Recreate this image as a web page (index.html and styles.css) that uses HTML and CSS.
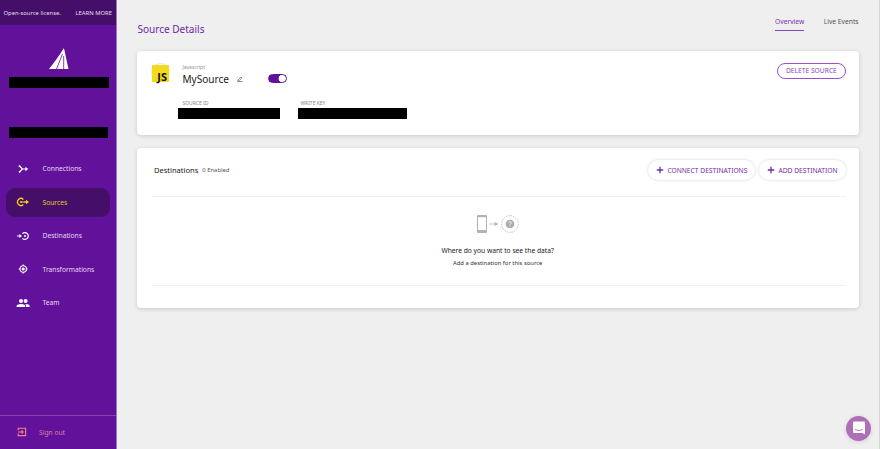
FILE: index.html
```html
<!DOCTYPE html>
<html lang="en">
<head>
<meta charset="utf-8">
<title>Source Details</title>
<link rel="stylesheet" href="styles.css">
</head>
<body>
<div class="app">
  <aside class="sidebar">
    <div class="license"><span>Open-source license.</span><a>LEARN MORE</a></div>
    <svg class="logo" viewBox="0 0 20 22"><path fill="#fff" d="M14.900 0 15 6 9 21H0Q9.500 9 14.900 0z"/><path fill="#fff" d="M15.200 1Q17.500 12 19.500 21H9z"/><path d="M13.500 6 7.500 21M14.700 8v13" stroke="#62119b" stroke-width=".8"/></svg>
    <div class="redacted workspace"></div>
    <div class="redacted account"></div>
    <nav class="nav">
      <a class="nav-item"><svg viewBox="0 0 14 12"><path d="M3.500 3 6.500 6 3.500 9M6 6h5" fill="none" stroke="currentColor" stroke-width="1.200"/><path d="M9.400 3.800 12.200 6 9.400 8.200z" fill="currentColor"/><circle cx="3.500" cy="3.200" r=".9" fill="currentColor"/><circle cx="3.500" cy="8.800" r=".9" fill="currentColor"/></svg><span>Connections</span></a>
      <a class="nav-item active"><svg viewBox="0 0 14 12"><path d="M7.400 3.400A3.500 3.500 0 1 0 7.400 8.600M8 6h3" fill="none" stroke="currentColor" stroke-width="1.300"/><path d="M10 3.800 13 6 10 8.200z" fill="currentColor"/><circle cx="5" cy="6" r="1.100" fill="currentColor"/><path d="M5 6h3" stroke="currentColor"/></svg><span>Sources</span></a>
      <a class="nav-item"><svg viewBox="0 0 14 12"><path d="M6.400 3.700A3.400 3.400 0 1 1 6.400 8.300M1 6h4" fill="none" stroke="currentColor" stroke-width="1.200"/><path d="M3.300 3.900 6.100 6 3.300 8.100z" fill="currentColor"/><circle cx="9" cy="6" r="1" fill="currentColor"/></svg><span>Destinations</span></a>
      <a class="nav-item"><svg viewBox="0 0 14 12"><circle cx="7.200" cy="6" r="3.200" fill="none" stroke="currentColor" stroke-width="1.100"/><circle cx="7.200" cy="6" r="1.600" fill="currentColor"/><path d="M7.200 1.500v1.500M7.200 9v1.500M2.700 6h1.500M10.200 6h1.500" stroke="currentColor" stroke-width="1.200"/></svg><span>Transformations</span></a>
      <a class="nav-item"><svg viewBox="0 0 14 12"><circle cx="5" cy="4" r="2" fill="currentColor"/><circle cx="9.600" cy="4" r="2" fill="currentColor"/><path d="M.6 10V8.800Q1.300 7 5 7T9.200 8.800V10zM10 10V8.600L9.300 7.100Q13.300 7.200 13.600 8.800V10z" fill="currentColor"/></svg><span>Team</span></a>
    </nav>
    <a class="signout"><svg viewBox="0 0 10 10"><path d="M1.200 3.200v-2h7.400v7.400H1.200v-2M1 5h5M4.500 3.300 6.200 5l-1.700 1.700" fill="none" stroke="currentColor" stroke-width="1.100"/></svg><span>Sign out</span></a>
  </aside>

  <main class="main">
    <header class="header">
      <h1>Source Details</h1>
      <div class="tabs"><a class="tab selected">Overview</a><a class="tab">Live Events</a></div>
    </header>

    <section class="card source">
      <div class="badge"><div class="js">JS</div></div>
      <div class="details">
        <div class="kind">Javascript</div>
        <div class="name-row">
          <span class="name">MySource</span>
          <svg class="pencil" viewBox="0 0 6 6"><path d="M.8 4.200 4 1l.9.900L1.800 5H.8zM.3 5.500H5.700" fill="none" stroke="#666" stroke-width=".7"/></svg>
          <span class="toggle"></span>
        </div>
        <div class="keys">
          <div class="key source-id"><label>SOURCE ID</label><div class="redacted"></div></div>
          <div class="key write-key"><label>WRITE KEY</label><div class="redacted"></div></div>
        </div>
      </div>
      <button class="delete"><span>DELETE SOURCE</span></button>
    </section>

    <section class="card destinations">
      <div class="dest-head">
        <h2>Destinations</h2><span class="count">0 Enabled</span>
        <button class="pill connect"><svg viewBox="0 0 8 8"><path d="M4 .8v6.400M.8 4h6.400" stroke="currentColor" stroke-width="1.300"/></svg><span>CONNECT DESTINATIONS</span></button>
        <button class="pill add"><svg viewBox="0 0 8 8"><path d="M4 .8v6.400M.8 4h6.400" stroke="currentColor" stroke-width="1.300"/></svg><span>ADD DESTINATION</span></button>
      </div>
      <div class="empty">
        <svg class="flow" viewBox="0 0 44 20"><path fill="#b3b3b3" fill-rule="evenodd" d="M2 1h8q1 0 1 1v16q0 1-1 1H2q-1 0-1-1V2q0-1 1-1zm0 2.300v12.700h8V3.300z"/><path d="M13 10h6" stroke="#b3b3b3" stroke-dasharray="1.500 .6"/><path d="M18.500 8 22.500 10l-4 2z" fill="#b3b3b3"/><circle cx="34" cy="10" r="8.400" fill="none" stroke="#b3b3b3" stroke-width=".9" stroke-dasharray="1.400 1.100"/><circle cx="34" cy="10" r="4.300" fill="#aaa"/><path d="M32.600 9Q32.700 7.600 34 7.600T35.400 8.800Q35.400 9.600 34 10.400V11M34 11.700v.9" fill="none" stroke="#fff" stroke-width=".8"/></svg>
        <p class="question">Where do you want to see the data?</p>
        <p class="hint">Add a destination for this source</p>
      </div>
    </section>
  </main>
  <div class="chat"><svg viewBox="0 0 14 14"><path d="M2 .5h10q1 0 1 1v12l-2.500-1.500H2q-1 0-1-1V1.500q0-1 1-1z" fill="#fff"/><path d="M3 8.500q4 2.400 8 0" fill="none" stroke="#ad70b6" stroke-width=".9"/></svg></div>
</div>
</body>
</html>
```
FILE: styles.css
```css
* { box-sizing: border-box; }
body { margin: 0; font-family: "Noto Sans", sans-serif; background: #efefef; color: #222; }
svg { display: block; flex: none; }
h1, h2, p { margin: 0; font-weight: 400; }
button { font: inherit; background: #fff; padding: 0; white-space: nowrap; }
.app { display: flex; width: 880px; height: 449px; overflow: hidden; border-right: 1px solid #d5d5d5; }
.redacted { height: 11px; background: #000; }

.sidebar { display: flex; flex-direction: column; width: 117px; flex: none; background: #62119b; border-right: 1px solid #a477c3; color: #e6d8ee; }
.license { display: flex; justify-content: space-between; height: 25px; padding: 0 4px 0 3.500px; line-height: 26px; font-size: 5.870px; background: #440e69; color: #e6dfeb; white-space: nowrap; }
.logo { width: 20px; height: 22px; margin: 23px 0 0 48.500px; }
.workspace { width: 100px; margin: 7px 0 0 9px; }
.account { width: 99px; margin: 39px 0 0 9px; }
.nav { margin-top: 16.300px; }
.nav-item { display: flex; align-items: center; height: 29.400px; margin: 0 6px 4px; padding-left: 10px; border-radius: 9px; font-size: 6.700px; }
.nav-item svg { width: 14px; height: 12px; margin-right: 12.500px; color: #fff; }
.nav-item.active { background: #440e69; color: #e8c81c; }
.nav-item.active svg { color: #f3d413; }
.signout { display: flex; align-items: center; height: 34px; margin-top: auto; padding: 0 0 1px 16.500px; border-top: 1px solid #8544ae; color: #d97fa4; font-size: 6.700px; }
.signout svg { width: 10px; height: 10px; margin-right: 12.500px; color: #f0848a; }

.main { flex: 1; padding: 0 20px 0 20.400px; }
.header { display: flex; justify-content: space-between; height: 51px; }
.header h1 { margin-top: 21px; line-height: 17px; font-size: 10.050px; color: #6d1fa7; }
.tabs { display: flex; gap: 19.500px; margin: 15px .5px 0 0; height: 15.500px; line-height: 14px; font-size: 6.700px; color: #555; }
.selected { color: #7a2db5; border-bottom: 1.500px solid #8b42be; }
.card { width: 721.500px; background: #fff; border-radius: 4px; box-shadow: 0 1px 4px rgba(0, 0, 0, .16); }
.source { display: flex; height: 84px; padding: 12px 13px 0 13.500px; }
.badge { width: 19px; height: 19px; padding: 1.500px; border: .5px solid #e4e4e4; border-radius: 50%; }
.js { display: flex; justify-content: flex-end; align-items: flex-end; width: 17px; height: 17px; margin: -.5px 0 0 -1.500px; padding-right: 1.500px; background: #f5da1c; color: #111; font: 700 11px/10px "Noto Sans", sans-serif; letter-spacing: .2px; }
.details { margin-left: 12.500px; }
.kind { height: 9px; line-height: 9px; font-size: 5px; color: #929292; }
.name-row { display: flex; align-items: center; height: 14px; }
.name { width: 54.500px; font-size: 10.050px; line-height: 14px; }
.pencil { width: 6px; height: 6px; }
.toggle { width: 19px; height: 9px; margin: 0 0 1.500px 25px; border: 1px solid #62119b; border-radius: 5px; background: radial-gradient(circle at 13.500px 3.500px, #fff 3.700px, #62119b 4.200px); }
.keys { display: flex; gap: 18px; margin: 12px 0 0 -4.500px; }
.key label { display: block; height: 10px; line-height: 10px; padding-left: 4.500px; font-size: 5px; color: #858585; }
.write-key label { padding-left: 2.500px; }
.source-id { width: 102px; }
.write-key { width: 109px; }
.delete { width: 69px; height: 15.500px; margin-left: auto; border: 1px solid #9b51cf; border-radius: 8px; font-size: 6.700px; line-height: 14px; color: #8d3dc2; }

.destinations { height: 160px; margin-top: 13px; padding: 0 12.500px 0 14.500px; }
.dest-head { display: flex; align-items: center; height: 49px; padding: 0 0 4px 2px; border-bottom: 1px solid #f0f0f0; }
.dest-head h2 { font-size: 7.550px; }
.count { margin: 0 auto 0 4px; font-size: 5.870px; color: #555; }
.pill { display: flex; align-items: center; height: 20px; padding-left: 7.500px; border: 0; border-radius: 10px; box-shadow: 0 0 3px rgba(0, 0, 0, .18); color: #742aac; font-size: 6.700px; }
.pill svg { width: 8px; height: 8px; margin-right: 3.500px; }
.connect { width: 107px; margin-right: 4px; }
.add { width: 87px; }
.empty { display: flex; flex-direction: column; align-items: center; height: 89px; padding: 17px 3px 0 0; border-bottom: 1px solid #f0f0f0; }
.flow { width: 44px; height: 20px; }
.question { margin-top: 11px; font-size: 6.700px; line-height: 11px; }
.hint { margin-top: 2.500px; font-size: 5.870px; line-height: 9px; color: #333; }
.chat { position: absolute; left: 846px; top: 415.500px; display: grid; place-items: center; width: 25px; height: 25px; border-radius: 50%; background: #ad70b6; box-shadow: 0 1px 5px rgba(0, 0, 0, .12); }
.chat svg { width: 14px; height: 14px; }
```
